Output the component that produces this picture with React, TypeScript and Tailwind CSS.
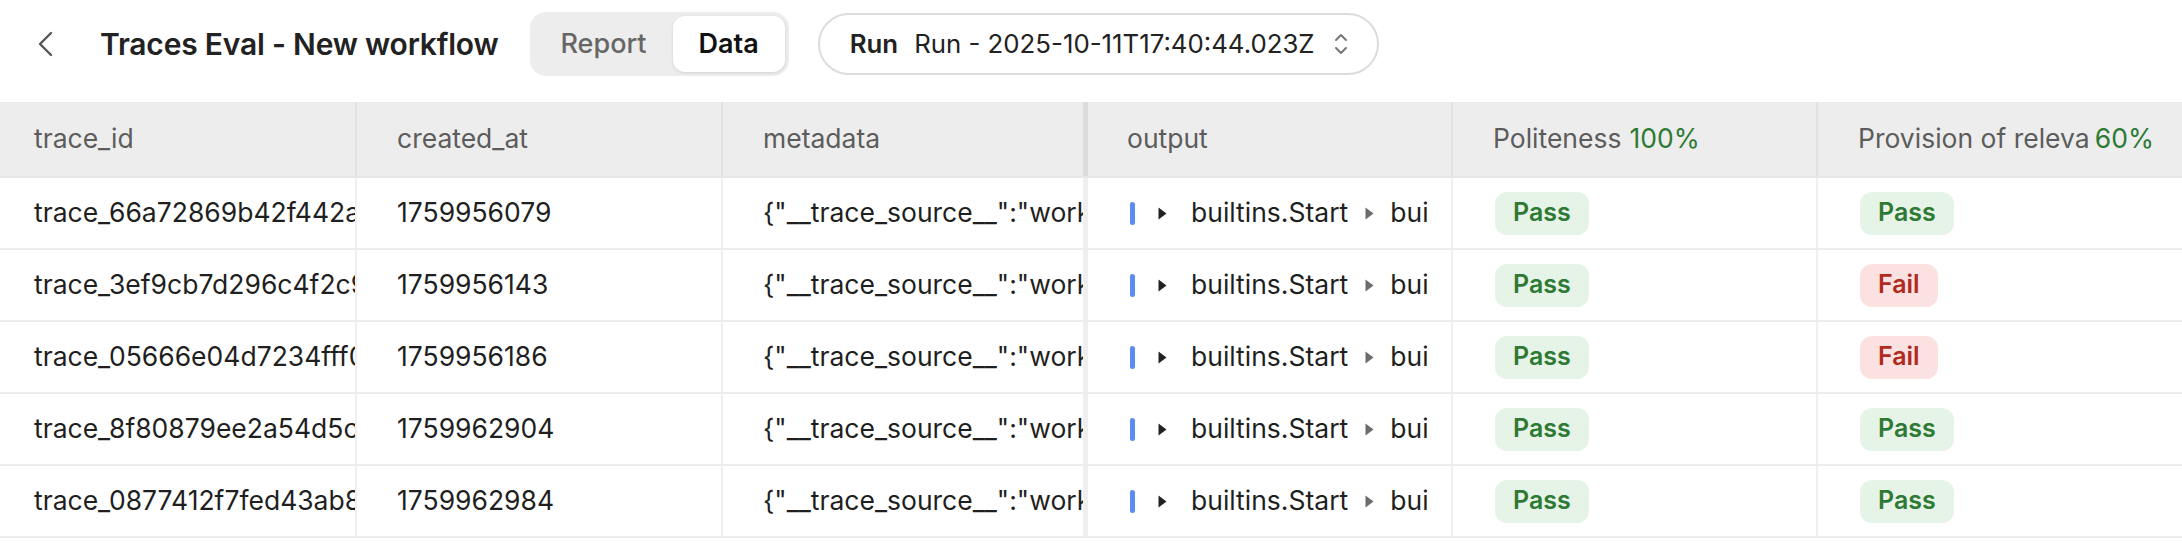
import React from 'react';

type Verdict = 'Pass' | 'Fail';

interface Row {
  traceId: string;
  createdAt: string;
  politeness: Verdict;
  relevance: Verdict;
}

const rows: Row[] = [
  { traceId: 'trace_66a72869b42f442a8c1e', createdAt: '1759956079', politeness: 'Pass', relevance: 'Pass' },
  { traceId: 'trace_3ef9cb7d296c4f2c91aa', createdAt: '1759956143', politeness: 'Pass', relevance: 'Fail' },
  { traceId: 'trace_05666e04d7234fff03bd', createdAt: '1759956186', politeness: 'Pass', relevance: 'Fail' },
  { traceId: 'trace_8f80879ee2a54d5c7e10', createdAt: '1759962904', politeness: 'Pass', relevance: 'Pass' },
  { traceId: 'trace_0877412f7fed43ab8d52', createdAt: '1759962984', politeness: 'Pass', relevance: 'Pass' },
];

// セル共通: 幅固定・はみ出しは切り捨て
const cell = 'flex items-center overflow-hidden whitespace-nowrap shrink-0';

function Badge({ verdict }: { verdict: Verdict }) {
  if (verdict === 'Pass') {
    return (
      <span className="inline-flex h-[43px] items-center rounded-[12px] bg-[#e6f4e7] px-[18px] text-[25px] font-semibold text-[#2e7a35]">
        Pass
      </span>
    );
  }
  return (
    <span className="inline-flex h-[43px] items-center rounded-[12px] bg-[#fbe2e1] px-[18px] text-[25px] font-semibold text-[#b02a22]">
      Fail
    </span>
  );
}

function Caret({ color }: { color: string }) {
  return (
    <svg width="9" height="13" viewBox="0 0 9 13" className="shrink-0">
      <path d="M0.5 0.5 L8.5 6.5 L0.5 12.5 Z" fill={color} />
    </svg>
  );
}

export default function App() {
  return (
    <div className="min-h-[552px] w-[2182px] overflow-hidden bg-white font-['Inter','Noto_Sans',sans-serif] text-[#1f1f1f]">
      {/* ヘッダー */}
      <div className="flex h-[88px] items-center">
        <button className="ml-[36px] flex h-[28px] w-[18px] items-center justify-center text-[#555]">
          <svg width="16" height="26" viewBox="0 0 16 26" fill="none">
            <path d="M14 2 L3 13 L14 24" stroke="currentColor" strokeWidth="2.4" strokeLinecap="round" strokeLinejoin="round" />
          </svg>
        </button>
        <h1 className="ml-[46px] text-[30px] font-semibold tracking-[-0.2px] text-[#222]">Traces Eval - New workflow</h1>
        <div className="ml-[32px] flex h-[64px] items-center rounded-[16px] bg-[#ededed] p-[4px]">
          <button className="h-[56px] px-[26px] text-[27px] font-medium text-[#666]">Report</button>
          <button className="h-[56px] rounded-[12px] bg-white px-[26px] text-[27px] font-semibold text-[#111] shadow-[0_1px_3px_rgba(0,0,0,0.12)]">
            Data
          </button>
        </div>
        <div className="ml-[29px] flex h-[62px] items-center rounded-full border-2 border-[#dcdcdc] pl-[30px] pr-[27px] text-[25.8px]">
          <span className="font-semibold text-[#222]">Run</span>
          <span className="ml-[16px] text-[#222]">Run - 2025-10-11T17:40:44.023Z</span>
          <svg width="18" height="26" viewBox="0 0 18 26" fill="none" className="ml-[17px] text-[#777]">
            <path d="M4 9 L9 4 L14 9" stroke="currentColor" strokeWidth="2" strokeLinecap="round" strokeLinejoin="round" />
            <path d="M4 17 L9 22 L14 17" stroke="currentColor" strokeWidth="2" strokeLinecap="round" strokeLinejoin="round" />
          </svg>
        </div>
      </div>

      {/* テーブル */}
      <div className="mt-[14px] text-[26.5px]">
        <div className="flex h-[76px] border-b-2 border-[#e6e6e6] bg-[#ededed] text-[#5c5c5c]">
          <div className={`${cell} w-[357px] border-r-2 border-[#e2e2e2] pl-[34px]`}>trace_id</div>
          <div className={`${cell} w-[366px] border-r-2 border-[#e2e2e2] pl-[40px]`}>created_at</div>
          <div className={`${cell} w-[365px] border-r-[5px] border-[#dcdcdc] pl-[40px]`}>metadata</div>
          <div className={`${cell} w-[365px] border-r-2 border-[#e2e2e2] pl-[39px]`}>output</div>
          <div className={`${cell} w-[365px] border-r-2 border-[#e2e2e2] pl-[40px]`}>
            <span>Politeness</span>
            <span className="ml-[8px] text-[#2e7a35]">100%</span>
          </div>
          <div className={`${cell} w-[364px] pl-[40px] pr-[28px]`}>
            <span className="min-w-0 overflow-hidden">Provision of relevant information</span>
            <span className="ml-[6px] shrink-0 text-[#2e7a35]">60%</span>
          </div>
        </div>

        {rows.map((r) => (
          <div key={r.traceId} className="flex h-[72px] border-b-2 border-[#ededed]">
            <div className={`${cell} w-[357px] border-r-2 border-[#efefef] pl-[34px]`}>{r.traceId}</div>
            <div className={`${cell} w-[366px] border-r-2 border-[#efefef] pl-[40px]`}>{r.createdAt}</div>
            <div className={`${cell} w-[365px] border-r-[5px] border-[#efefef] pl-[40px]`}>
              {'{"__trace_source__":"workflow","workflow_id":"wf_68e"}'}
            </div>
            <div className={`${cell} w-[365px] border-r-2 border-[#efefef] pl-[42px] pr-[24px]`}>
              <div className="flex min-w-0 items-center overflow-hidden">
                <span className="h-[23px] w-[5px] shrink-0 rounded-full bg-[#5b8def]" />
                <span className="ml-[23px]">
                  <Caret color="#222" />
                </span>
                <span className="ml-[24px]">builtins.Start</span>
                <span className="ml-[17px]">
                  <Caret color="#6b6b6b" />
                </span>
                <span className="ml-[16px]">builtins.Agent</span>
              </div>
            </div>
            <div className={`${cell} w-[365px] border-r-2 border-[#efefef] pl-[42px]`}>
              <Badge verdict={r.politeness} />
            </div>
            <div className={`${cell} w-[364px] pl-[42px]`}>
              <Badge verdict={r.relevance} />
            </div>
          </div>
        ))}
      </div>
    </div>
  );
}
